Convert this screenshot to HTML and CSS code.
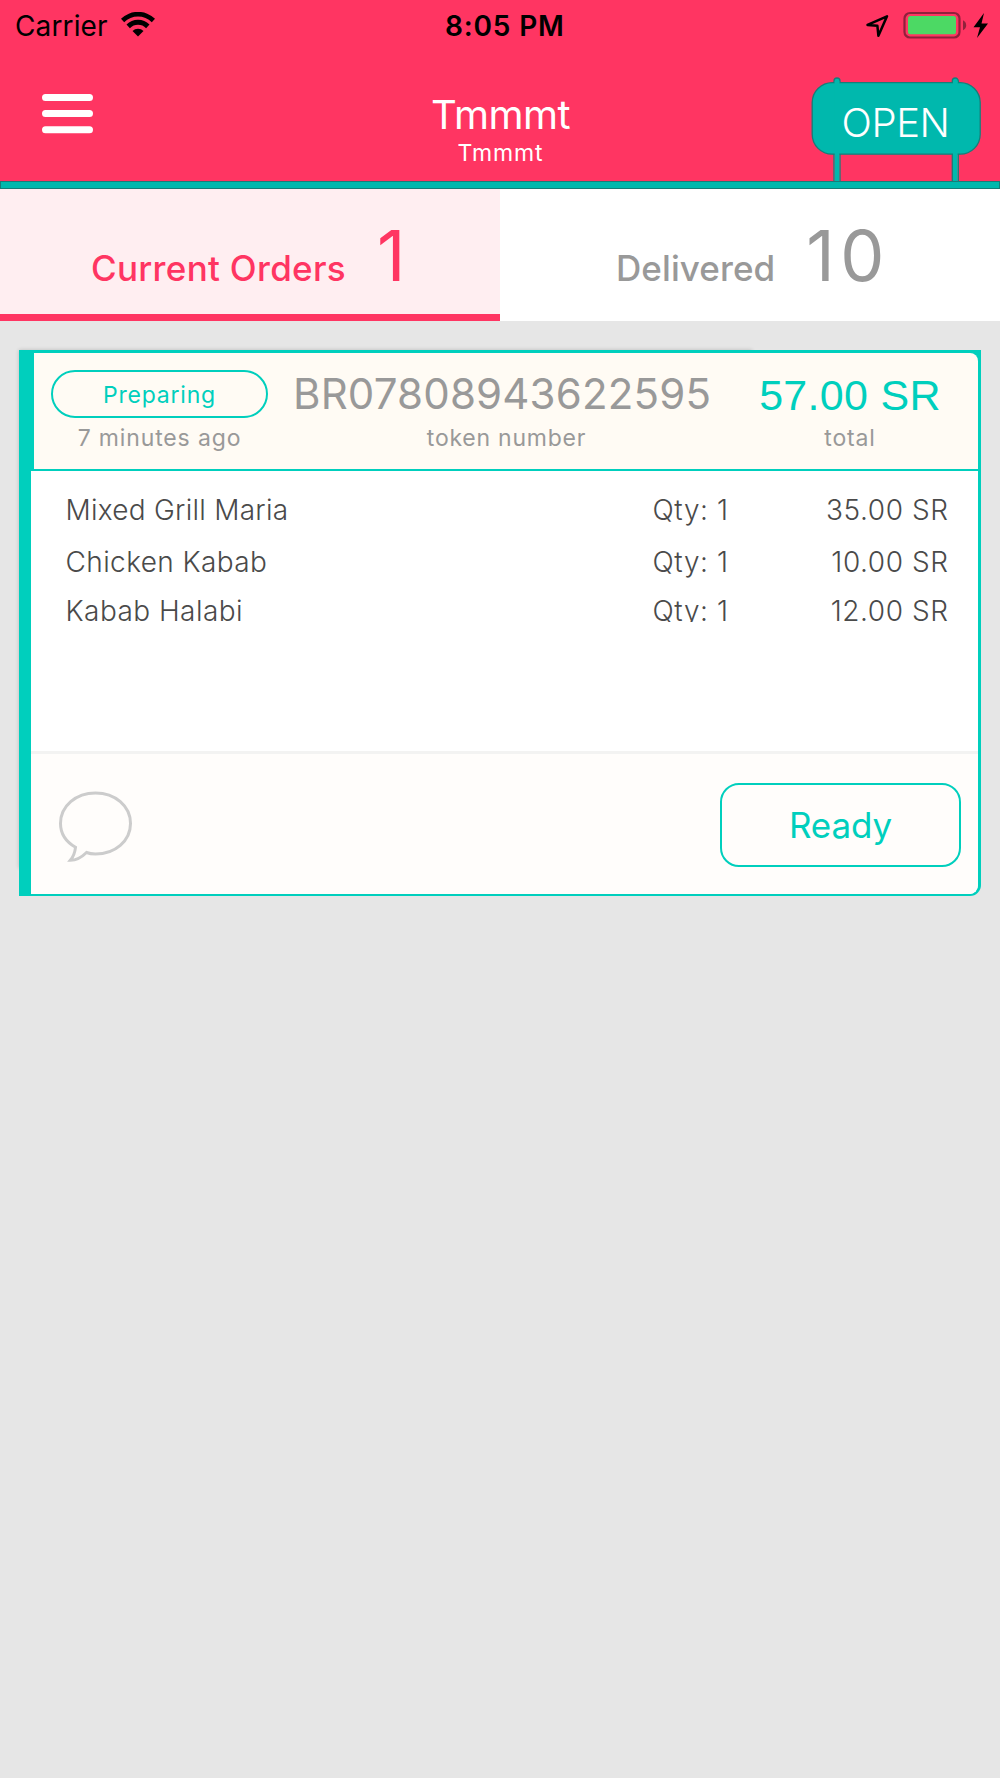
FILE: index.html
```html
<!DOCTYPE html>
<html lang="en">
<head>
<meta charset="utf-8">
<title>Orders</title>
<link rel="stylesheet" href="styles.css">
</head>
<body>
<header class="header">
  <div class="status">
    <div class="status-left">
      <span>Carrier</span>
      <svg class="wifi" width="34" height="25" viewBox="0 0 34 25">
        <path d="M0 6.8A24.2 24.2 0 0 1 34 6.8L30.8 10.2A19.6 19.6 0 0 0 3.2 10.2Z"/>
        <path d="M5.5 12.6A16.3 16.3 0 0 1 28.5 12.6L25.1 16.2A11.5 11.5 0 0 0 8.9 16.2Z"/>
        <path d="M11.500 19A7.900 7.900 0 0 1 22.500 19L17 24.400Z"/>
      </svg>
    </div>
    <div class="time">8:05 PM</div>
    <svg class="status-right" width="130" height="30" viewBox="862 10 130 30">
      <path d="M867.500 23.900L887 15.300L878.400 34.800L877.400 24.800Z" fill="none" stroke="#000" stroke-width="2.500" stroke-linejoin="round"/>
      <rect x="904.500" y="12" width="55" height="24.500" rx="5.500" fill="none" stroke="#91213b" stroke-width="2.200"/>
      <rect x="908" y="15" width="48" height="18.200" rx="2.500" fill="#4cd964"/>
      <path d="M963 19.300Q966.200 21 966.200 24.300T963 29.300Z" fill="#91213b"/>
      <path d="M984 12L973.500 26.200H980L977 37L988 22.500H981.500Z"/>
    </svg>
  </div>
  <div class="nav">
    <svg class="menu" width="52" height="40" viewBox="0 0 52 40">
      <path d="M3.500 3.500H47.500M3.500 19.600H47.500M3.500 35.700H47.500" stroke="#fff" stroke-width="7" stroke-linecap="round"/>
    </svg>
    <div class="titles">
      <div class="title">Tmmmt</div>
      <div class="subtitle">Tmmmt</div>
    </div>
    <div class="sign">
      <svg class="sign-art" width="170" height="104" viewBox="811 77 170 104">
        <g fill="#00b8ad" stroke="#157e79" stroke-width="1.300">
          <rect x="812.200" y="82.600" width="168" height="71.600" rx="20"/>
          <path d="M834 83V81A3 3 0 0 1 840 81V83M952.300 83V81A3 3 0 0 1 958.300 81V83"/>
          <path d="M834 154V181M840 154V181M952.300 154V181M958.300 154V181"/>
        </g>
        <path d="M834.700 81H839.300V181H834.700ZM953 81H957.600V181H953Z" fill="#00b8ad"/>
      </svg>
      <span class="sign-text">OPEN</span>
    </div>
  </div>
  <div class="rail"></div>
</header>
<nav class="tabs">
  <div class="tab tab-active"><span class="label">Current Orders</span><span class="count">1</span></div>
  <div class="tab tab-delivered"><span class="label">Delivered</span><span class="count">10</span></div>
</nav>
<main class="list">
  <article class="card">
    <div class="card-box">
      <div class="card-head">
        <div class="summary">
          <div class="cell">
            <div class="pill">Preparing</div>
            <div class="caption">7 minutes ago</div>
          </div>
          <div class="cell">
            <div class="token">BR07808943622595</div>
            <div class="caption caption-token">token number</div>
          </div>
          <div class="cell">
            <div class="total">57.00 SR</div>
            <div class="caption caption-total">total</div>
          </div>
        </div>
      </div>
      <div class="items">
        <div class="item"><span>Mixed Grill Maria</span><span class="qty">Qty: 1</span><span class="price">35.00 SR</span></div>
        <div class="item item-second"><span>Chicken Kabab</span><span class="qty">Qty: 1</span><span class="price">10.00 SR</span></div>
        <div class="item item-last"><span>Kabab Halabi</span><span class="qty">Qty: 1</span><span class="price">12.00 SR</span></div>
      </div>
      <div class="card-foot">
        <svg width="76" height="74" viewBox="0 0 76 74" fill="none" stroke="#ccc" stroke-width="3">
          <path d="M17.500 57.300C7.500 51.500 2.500 42.500 2.500 33.500C2.500 16 18 3 37.500 3S72.500 16 72.500 33.500S57 64 37.500 64C34 64 31 63.500 28.500 62.500C23 68 18 70.300 12.300 70.300C15.500 66.500 17 62 17.500 57.300Z"/>
        </svg>
        <div class="ready">Ready</div>
      </div>
    </div>
  </article>
</main>
</body>
</html>
```
FILE: styles.css
```css
* { box-sizing: border-box; }
body {
  margin: 0;
  min-height: 1778px;
  background: #e6e6e6;
  font-family: Inter, "Liberation Sans", sans-serif;
  color: #4a4a4a;
}
svg { display: block; flex: none; }

.header { background: #ff3562; color: #fff; }
.status {
  display: grid;
  grid-template-columns: 445px 1fr 130px;
  align-items: center;
  height: 51px;
  padding: 0 8px 0 0;
  font-size: 28px;
  color: #000;
}
.status-left { display: flex; align-items: center; gap: 13px; padding-left: 15px; letter-spacing: .13px; }
.wifi { margin-bottom: 2px; }
.time { font-weight: 600; letter-spacing: .83px; }

.nav {
  display: grid;
  grid-template-columns: 1fr 200px 1fr;
  height: 130px;
}
.menu { margin: 43px 0 0 42px; }
.titles { padding-top: 43.5px; padding-left: 1px; text-align: center; }
.title { font-size: 40px; line-height: 40px; letter-spacing: -.6px; }
.subtitle { font-size: 23px; line-height: 37px; letter-spacing: .9px; }
.sign {
  display: grid;
  justify-self: end;
  align-self: end;
  width: 170px;
  height: 104px;
  margin-right: 19px;
}
.sign-art, .sign-text { grid-area: 1 / 1; }
.sign-text {
  padding: 9.500px 1px 0 0;
  line-height: 72px;
  text-align: center;
  font-size: 40px;
  font-weight: 350;
  letter-spacing: -.4px;
}
.rail { height: 8px; background: #00b8ad; border: 1.500px solid #157e79; }

.tabs { display: grid; grid-template-columns: 1fr 1fr; height: 132px; background: #fff; color: #999; }
.tab { display: flex; align-items: baseline; padding-top: 31.500px; }
.tab-active {
  gap: 31px;
  padding-left: 91px;
  background: #ffeef1;
  border-bottom: 7px solid #ff3562;
  color: #ff3562;
}
.tab-delivered { gap: 31px; padding-left: 116px; }
.label { font-size: 35px; font-weight: 460; letter-spacing: .08px; }
.tab-active .label { letter-spacing: .3px; }
.count { font-size: 70px; line-height: 70px; letter-spacing: 5.500px; }

.list { padding: 29px 19px; }
.card { position: relative; z-index: 0; }
.card::before {
  content: "";
  position: absolute;
  z-index: -1;
  left: 1px;
  top: 1px;
  width: 733px;
  height: 518px;
  box-shadow: -1px -1px 4px rgba(0, 0, 0, .2);
}
.card-box {
  height: 546px;
  border: solid #00cfbd;
  border-width: 0 3px 2px 12px;
  border-bottom-right-radius: 11px;
  background: #fff;
  overflow: hidden;
}
.card-head { height: 121px; padding: 3px 0 2px 3px; background: #00cfbd; }
.summary {
  display: grid;
  grid-template-columns: 217px 418px 182px;
  column-gap: 24px;
  height: 116px;
  padding: 17px 0 0 17px;
  background: #fffbf4;
  border-top-right-radius: 8px;
  color: #999;
  text-align: center;
}
.cell:last-child { margin-left: 25px; margin-right: -25px; }
.pill {
  height: 48px;
  border: 2px solid #00cfbd;
  border-radius: 24px;
  line-height: 46px;
  font-size: 23px;
  letter-spacing: .78px;
  color: #00cfbd;
}
.caption { font-size: 23px; line-height: 41px; letter-spacing: .86px; }
.caption-token { padding-left: 11px; letter-spacing: .76px; }
.caption-total { line-height: 34px; }
.token { padding-left: 1px; font-size: 42px; line-height: 48px; letter-spacing: .18px; white-space: nowrap; }
.total {
  font: 43px/51px "Liberation Sans", Arial, sans-serif;
  letter-spacing: .3px;
  color: #00cfbd;
  white-space: nowrap;
}

.items { height: 280px; padding: 13px 29.500px 0 34.500px; }
.item {
  display: grid;
  grid-template-columns: 587px 1fr auto;
  height: 52px;
  line-height: 52px;
  font-size: 28px;
  font-weight: 300;
  letter-spacing: .26px;
}
.item-second { height: 51px; line-height: 53px; letter-spacing: .4px; }
.item-last { height: 35px; line-height: 48px; letter-spacing: .45px; overflow: hidden; }
.qty { letter-spacing: .6px; }
.price { letter-spacing: .56px; }

.card-foot {
  display: flex;
  justify-content: space-between;
  height: 143px;
  padding: 29px 17px 0 27px;
  border-top: 3px solid #f3f3f2;
  background: #fffdfb;
}
.card-foot svg { margin-top: 7px; }
.ready {
  width: 241px;
  height: 84px;
  border: 2px solid #00cfbd;
  border-radius: 19px;
  line-height: 81px;
  text-align: center;
  font-size: 35px;
  letter-spacing: -.13px;
  color: #00cfbd;
}
```
